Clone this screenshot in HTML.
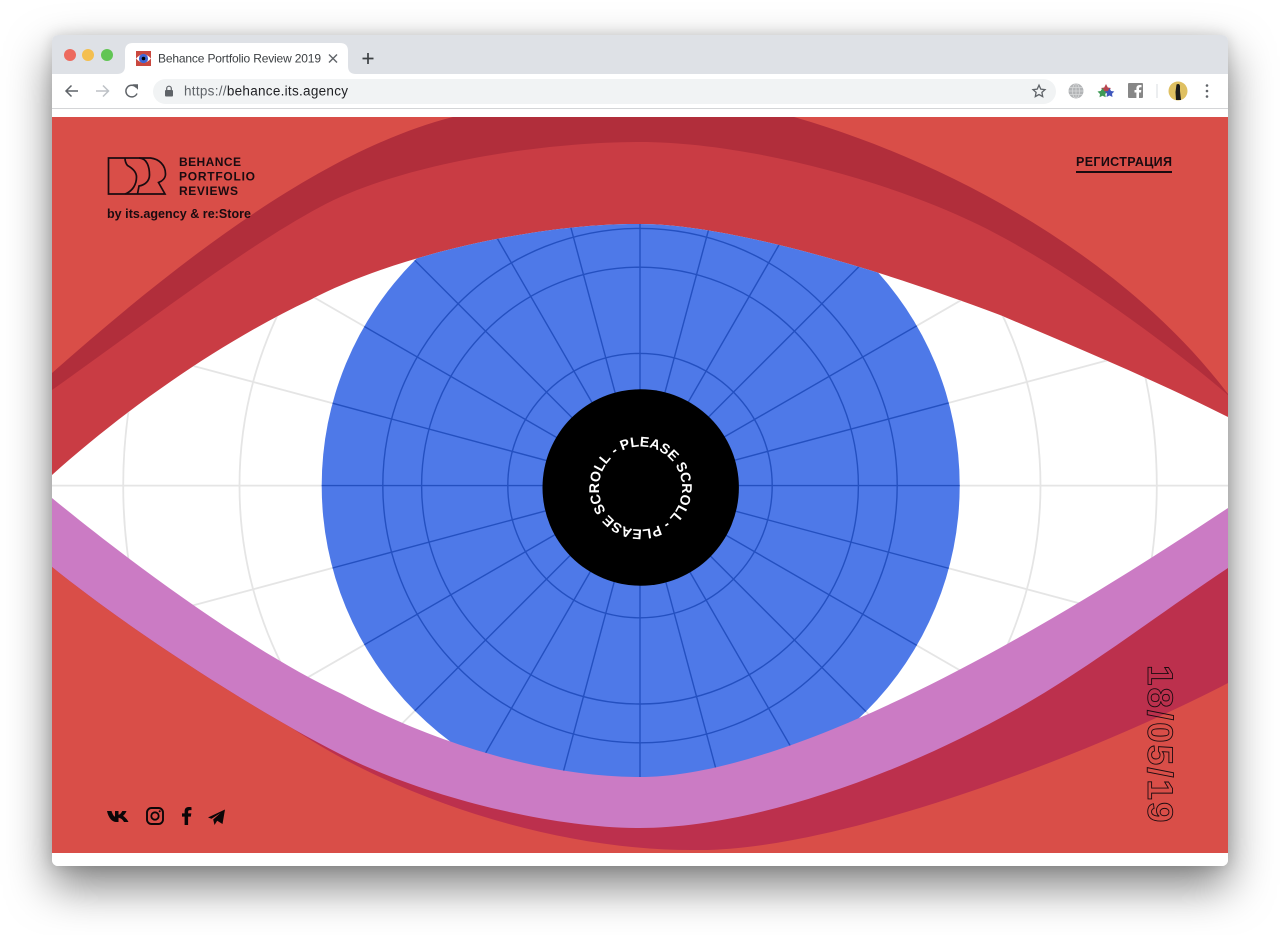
<!DOCTYPE html>
<html>
<head>
<meta charset="utf-8">
<style>
html,body{margin:0;padding:0;background:#fff;width:1280px;height:935px;overflow:hidden}
#root{position:relative;width:1280px;height:935px;overflow:hidden}
#win{position:absolute;left:52px;top:35px;width:1176px;height:831px;border-radius:6px;box-shadow:0 20px 44px rgba(0,0,0,.5),0 0 14px rgba(0,0,0,.14);background:#fff}
svg{position:absolute;left:0;top:0;display:block}
text{font-family:"Liberation Sans",sans-serif}
</style>
</head>
<body>
<div id="root">
<div id="win"></div>
<svg width="1280" height="935" viewBox="0 0 1280 935" xmlns="http://www.w3.org/2000/svg">
<defs>
<clipPath id="win-clip"><rect x="52" y="35" width="1176" height="831" rx="6"/></clipPath>
<clipPath id="page"><rect x="52" y="117" width="1176" height="736"/></clipPath>
<clipPath id="eye"><path d="M52 475C130 405 225 340 310 300C395 255 540 223 640 224C720 224 860 262 1000 315C1080 349 1150 378 1228 417L1228 853L52 853Z"/></clipPath>
<clipPath id="iris"><circle cx="640.700" cy="485.600" r="319"/></clipPath>
</defs>

<g clip-path="url(#win-clip)">
<rect x="52" y="35" width="1176" height="39" fill="#dee1e6"/>
<rect x="52" y="74" width="1176" height="792" fill="#fff"/>
<rect x="52" y="108" width="1176" height="1" fill="#d4d5d7"/>
<path d="M117 74Q125 74 125 66V51Q125 43 133 43H340Q348 43 348 51V66Q348 74 356 74Z" fill="#fff"/>
</g>
<circle cx="70" cy="55" r="6" fill="#ed6a5e"/>
<circle cx="88" cy="55" r="6" fill="#f4bf4f"/>
<circle cx="107" cy="55" r="6" fill="#61c554"/>

<rect x="136" y="51" width="15" height="15" fill="#c9483f"/>
<path d="M136 58.500Q143.500 50 151 58.500Q143.500 67 136 58.500Z" fill="#fff"/>
<circle cx="143.500" cy="58.500" r="4.600" fill="#3f66d6"/>
<circle cx="143.500" cy="58.500" r="1.800" fill="#000"/>
<text x="158" y="62.500" font-size="12" fill="#3c4043" textLength="163" lengthAdjust="spacing">Behance Portfolio Review 2019</text>
<path d="M329 54.500L337 62.500M337 54.500L329 62.500" stroke="#5f6368" stroke-width="1.400" fill="none"/>
<path d="M368 53V64M362.500 58.500H373.500" stroke="#3c4043" stroke-width="1.700" fill="none"/>

<path d="M78 91H67M71.500 85.500L66 91L71.500 96.500" stroke="#5f6368" stroke-width="1.500" fill="none"/>
<path d="M96 91H108M103 85.500L108.500 91L103 96.500" stroke="#bdc1c6" stroke-width="1.500" fill="none"/>
<path d="M137 93.500A5.800 5.800 0 1 1 136 87.200" stroke="#5f6368" stroke-width="1.500" fill="none"/>
<path d="M132.500 84.300H138V89.800Z" fill="#5f6368"/>
<rect x="153" y="79" width="903" height="25" rx="12.500" fill="#f1f3f4"/>
<rect x="165" y="90" width="8" height="6.500" rx="1" fill="#5f6368"/>
<path d="M166.700 90.500V88.500A2.300 2.300 0 0 1 171.300 88.500V90.500" stroke="#5f6368" stroke-width="1.200" fill="none"/>
<text x="184" y="95.500" font-size="13.500" textLength="164" lengthAdjust="spacing"><tspan fill="#5f6368">https://</tspan><tspan fill="#202124">behance.its.agency</tspan></text>
<path d="M1039 85.200L1040.800 89.100L1045 89.600L1041.900 92.400L1042.700 96.600L1039 94.500L1035.300 96.600L1036.100 92.400L1033 89.600L1037.200 89.100Z" stroke="#5f6368" stroke-width="1.300" fill="none"/>
<circle cx="1076" cy="91" r="7.500" fill="#b2b4b6"/>
<path d="M1068.500 91H1083.500M1069.500 87.500H1082.500M1069.500 94.500H1082.500M1076 83.500V98.500" stroke="#d8d9da" stroke-width=".8" fill="none"/>
<ellipse cx="1076" cy="91" rx="3.500" ry="7.500" stroke="#d8d9da" stroke-width=".8" fill="none"/>
<polygon points="1106,84 1107.800,87.500 1111,88 1108.500,90.500 1109,94 1106,92.300 1103,94 1103.500,90.500 1101,88 1104.200,87.500" fill="#b8454f"/>
<polygon points="1102.500,88 1104.300,91 1107.500,91.500 1105.200,94 1105.700,97.300 1102.500,95.800 1099.500,97.300 1100,94 1097.500,91.500 1100.700,91" fill="#3f9a56"/>
<polygon points="1109.500,88 1111,91 1114.300,91.500 1112,93.800 1112.500,97 1109.500,95.500 1106.500,97 1107,93.800 1104.800,91.500 1108,91" fill="#3f57bd"/>
<rect x="1128" y="83" width="15" height="15" rx="1" fill="#878787"/>
<path d="M1139 98V92.500H1141L1141.300 90H1139V88.500Q1139 87.200 1140.300 87.200H1141.500V85H1139.700Q1136.400 85 1136.400 88.300V90H1134.500V92.500H1136.400V98Z" fill="#fff"/>
<rect x="1156.500" y="84" width="1" height="14" fill="#dadce0"/>
<circle cx="1178" cy="91" r="9.500" fill="#dfc062"/>
<path d="M1176.500 84.500Q1179.500 83 1180 86L1180 91L1181 100H1176L1175.500 92Z" fill="#1b1a19"/>
<circle cx="1207" cy="85.500" r="1.300" fill="#5f6368"/>
<circle cx="1207" cy="91" r="1.300" fill="#5f6368"/>
<circle cx="1207" cy="96.500" r="1.300" fill="#5f6368"/>

<g clip-path="url(#page)">
<rect x="52" y="117" width="1176" height="736" fill="#d94e48"/>
<path fill="#b12e3b" d="M52 373C182 258 323 150 453 117L480 100L760 100L794 117C960 165 1130 264 1228 394L1228 700L52 700Z"/>
<path fill="#c93c44" d="M52 390C140 328 240 250 320 207C400 164 540 142 640 142C740 142 880 177 977 224C1060 264 1170 345 1228 395L1228 700L52 700Z"/>

<g clip-path="url(#eye)">
<rect x="52" y="117" width="1176" height="736" fill="#fff"/>
<g transform="translate(640 485.600)" stroke="#e5e5e5" stroke-width="1.800" fill="none">
<circle r="400.500"/><circle r="516.800"/>
<line x1="-900" x2="900"/>
<line x1="-900" x2="900" transform="rotate(15)"/>
<line x1="-900" x2="900" transform="rotate(30)"/>
<line x1="-900" x2="900" transform="rotate(45)"/>
<line x1="-900" x2="900" transform="rotate(135)"/>
<line x1="-900" x2="900" transform="rotate(150)"/>
<line x1="-900" x2="900" transform="rotate(165)"/>
</g>
<g clip-path="url(#iris)">
<rect x="300" y="150" width="680" height="700" fill="#4e79e8"/>
<g transform="translate(640 485.600)" stroke="#2450c0" stroke-width="1.400" fill="none">
<circle r="132.200"/><circle r="218.400"/><circle r="257.200"/>
<line x1="-400" x2="400"/>
<line x1="-400" x2="400" transform="rotate(15)"/>
<line x1="-400" x2="400" transform="rotate(30)"/>
<line x1="-400" x2="400" transform="rotate(45)"/>
<line x1="-400" x2="400" transform="rotate(60)"/>
<line x1="-400" x2="400" transform="rotate(75)"/>
<line x1="-400" x2="400" transform="rotate(90)"/>
<line x1="-400" x2="400" transform="rotate(105)"/>
<line x1="-400" x2="400" transform="rotate(120)"/>
<line x1="-400" x2="400" transform="rotate(135)"/>
<line x1="-400" x2="400" transform="rotate(150)"/>
<line x1="-400" x2="400" transform="rotate(165)"/>
</g>
</g>
</g>

<circle cx="640.700" cy="487.500" r="98.200" fill="#000"/>
<path id="ring" fill="none" d="M614.900 455.300A41.500 41.500 0 1 1 666.100 520.700A41.500 41.500 0 1 1 614.900 455.300"/>
<text font-size="14" font-weight="700" fill="#fff"><textPath href="#ring">- PLEASE SCROLL - PLEASE SCROLL</textPath></text>

<path fill="#cb7bc4" d="M52 498C130 562 250 651 342 694C430 741 540 777 640 777C730 777 860 725 1000 648C1080 604 1160 553 1228 508L1228 853L52 853Z"/>
<path fill="#bc304d" d="M52 567C130 630 260 715 352 760C430 797 550 828 640 828C740 828 880 785 1015 710C1085 671 1160 613 1228 568L1228 853L52 853Z"/>
<path fill="#d94e48" d="M52 567C114.400 617.400 210.100 681.900 293 728.700C400 800 560 852 700 850C840 850 1090 755 1228 683L1228 853L52 853Z"/>

<g fill="none" stroke="#1a0b10" stroke-width="1.700" stroke-linejoin="miter">
<path d="M108.500 158H150.500C159 159 165.500 165 165.500 174C165.500 178 162.500 181 158.500 182.500L165 194H108.500Z"/>
<path d="M125 158C125 160 125.500 163 127.500 165.500C132 168 136.500 172 136.500 177C136.500 184 133 191 125 194"/>
<path d="M139 158C147 158 149.500 167 149.500 175C149.500 181 145 185 139 186L137.500 194"/>
</g>
<g fill="#1a0b10" font-weight="700" font-size="12">
<text x="179" y="166" textLength="62" lengthAdjust="spacing">BEHANCE</text>
<text x="179" y="180.500" textLength="76" lengthAdjust="spacing">PORTFOLIO</text>
<text x="179" y="195" textLength="59" lengthAdjust="spacing">REVIEWS</text>
<text x="107" y="218" font-size="12.500" textLength="144" lengthAdjust="spacing">by its.agency &amp; re:Store</text>
<text x="1076" y="166" font-size="12.500" textLength="96" lengthAdjust="spacing">РЕГИСТРАЦИЯ</text>
</g>
<rect x="1076" y="171" width="96" height="2" fill="#1a0b10"/>

<path fill="#0c0608" d="M107 811H111.500C112.400 814 113.500 816 115 816.800V811H118.500V814.800C120 814.500 121.500 812.800 122.300 811H126.500C125.700 813 124.300 815 123 815.900C124.500 816.800 127 819 128.500 822H124C123 820 120.800 818 118.500 817.800V822H116.500C112 822 108.500 818 107 811Z"/>
<rect x="147" y="808" width="16" height="16" rx="4.500" fill="none" stroke="#0c0608" stroke-width="1.900"/>
<circle cx="155" cy="816" r="3.700" fill="none" stroke="#0c0608" stroke-width="1.800"/>
<circle cx="159.700" cy="811.300" r="1" fill="#0c0608"/>
<path fill="#0c0608" d="M184.600 825V816.600H182V813.400H184.600V811.300C184.600 808.400 186.400 807 188.600 807C189.700 807 190.800 807.100 191.500 807.200V810.100H189.800C188.500 810.100 188.100 810.800 188.100 811.800V813.400H191.300L190.800 816.600H188.100V825Z"/>
<path fill="#0c0608" d="M208 817.500L225 809.500L222.500 824L217.200 820.700L214.500 825L213.200 819.500L220.500 813L211.500 818.800Z"/>

<text transform="translate(1148 665) rotate(90) scale(1.050 1)" font-size="35" font-weight="700" fill="none" stroke="#1a0b10" stroke-width=".9" textLength="150" lengthAdjust="spacing">18/05/19</text>
</g>
</svg>
</div>
</body>
</html>
